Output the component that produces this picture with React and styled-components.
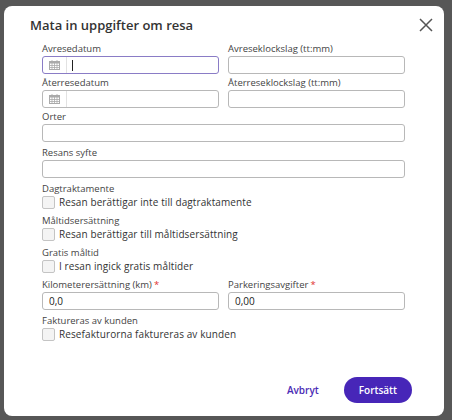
import React from 'react';
import styled, { createGlobalStyle } from 'styled-components';

const Global = createGlobalStyle`
	body {
		margin: 0;
		background: #575757;
		font-family: "Open Sans", "Noto Sans", sans-serif;
	}
`;

const Page = styled.div`
	padding: 6px 8px 4px 4px;
	height: 420px;
	box-sizing: border-box;
`;

const Modal = styled.div`
	background: #fff;
	border-radius: 8px;
	height: 410px;
	box-sizing: border-box;
	padding: 10px 10px 0 26px;
	display: flex;
	flex-direction: column;
`;

const Header = styled.div`
	display: flex;
	justify-content: space-between;
	align-items: center;
`;

const Title = styled.h2`
	margin: 0;
	font-size: 13px;
	font-weight: 600;
	color: #333;
`;

const Close = styled.button`
	border: 0;
	background: none;
	padding: 0;
	display: flex;
	cursor: pointer;
`;

const Form = styled.div`
	padding: 9px 29px 0 12px;
	display: flex;
	flex-direction: column;
`;

const Row = styled.div`
	display: grid;
	grid-template-columns: 1fr 1fr;
	column-gap: 9px;
`;

const Field = styled.div`
	display: flex;
	flex-direction: column;
	margin-bottom: ${p => p.gap || 3}px;
`;

const Label = styled.label`
	font-size: 9.5px;
	color: #444;
	line-height: 12px;
	margin-bottom: 1px;
`;

const Star = styled.span`
	color: #e0302f;
	margin-left: 2px;
`;

const InputBox = styled.div`
	height: 18px;
	box-sizing: border-box;
	border: 1px solid ${p => (p.focus ? '#8a7cc6' : '#b8b8b8')};
	border-radius: 3px;
	display: flex;
	align-items: center;
	font-size: 10px;
	color: #222;
	padding-left: ${p => (p.cal ? 0 : 6)}px;
`;

const CalIcon = styled.span`
	width: 23px;
	height: 100%;
	border-right: 1px solid #e2e2e2;
	display: flex;
	align-items: center;
	justify-content: center;
	margin-right: 5px;
`;

const Caret = styled.span`
	width: 1px;
	height: 11px;
	background: #222;
`;

const Section = styled.div`
	display: flex;
	flex-direction: column;
	margin-bottom: 6px;
`;

const Check = styled.label`
	display: flex;
	align-items: center;
	gap: 4px;
	font-size: 10px;
	line-height: 13px;
	color: #333;
	letter-spacing: 0.1px;
`;

const Box = styled.span`
	width: 11px;
	height: 11px;
	border: 1px solid #c4c4c4;
	border-radius: 2px;
	background: #f4f4f4;
`;

const Footer = styled.div`
	margin-top: auto;
	margin-bottom: 13px;
	display: flex;
	justify-content: flex-end;
	align-items: center;
	gap: 25px;
	padding-right: 22px;
`;

const Button = styled.button`
	font-family: inherit;
	font-size: 10px;
	font-weight: 600;
	border: 0;
	cursor: pointer;
	color: ${p => (p.primary ? '#fff' : '#4a2bb5')};
	background: ${p => (p.primary ? '#4726b8' : 'transparent')};
	height: 26px;
	padding: 0 ${p => (p.primary ? 15 : 0)}px;
	border-radius: 13px;
`;

const Calendar = () => (
	<svg width="11" height="10" viewBox="0 0 11 10">
		<rect x="0.5" y="1.5" width="10" height="8" fill="none" stroke="#aaa" />
		<rect x="0.5" y="1.5" width="10" height="2" fill="#aaa" />
		<path d="M3 0v2M8 0v2M0 5.5h11M0 7.5h11M3 3v7M5.5 3v7M8 3v7" stroke="#aaa" strokeWidth="0.8" />
	</svg>
);

function Input({ label, required, cal, focus, value, gap }) {
	return (
		<Field gap={gap}>
			<Label>
				{label}
				{required && <Star>*</Star>}
			</Label>
			<InputBox cal={cal} focus={focus}>
				{cal && (
					<CalIcon>
						<Calendar />
					</CalIcon>
				)}
				{focus && <Caret />}
				{value}
			</InputBox>
		</Field>
	);
}

function CheckSection({ label, text }) {
	return (
		<Section>
			<Label>{label}</Label>
			<Check>
				<Box />
				{text}
			</Check>
		</Section>
	);
}

export default function App() {
	return (
		<Page>
			<Global />
			<Modal>
				<Header>
					<Title>Mata in uppgifter om resa</Title>
					<Close aria-label="Stäng">
						<svg width="16" height="16" viewBox="0 0 16 16">
							<path d="M2 2L14 14M14 2L2 14" stroke="#555" strokeWidth="1.5" />
						</svg>
					</Close>
				</Header>
				<Form>
					<Row>
						<Input label="Avresedatum" cal focus />
						<Input label="Avreseklockslag (tt:mm)" />
					</Row>
					<Row>
						<Input label="Återresedatum" cal />
						<Input label="Återreseklockslag (tt:mm)" />
					</Row>
					<Input label="Orter" gap={5} />
					<Input label="Resans syfte" gap={5} />
					<CheckSection label="Dagtraktamente" text="Resan berättigar inte till dagtraktamente" />
					<CheckSection label="Måltidsersättning" text="Resan berättigar till måltidsersättning" />
					<CheckSection label="Gratis måltid" text="I resan ingick gratis måltider" />
					<Row>
						<Input label="Kilometerersättning (km)" required value="0,0" gap={5} />
						<Input label="Parkeringsavgifter" required value="0,00" gap={5} />
					</Row>
					<CheckSection label="Faktureras av kunden" text="Resefakturorna faktureras av kunden" />
				</Form>
				<Footer>
					<Button>Avbryt</Button>
					<Button primary>Fortsätt</Button>
				</Footer>
			</Modal>
		</Page>
	);
}
